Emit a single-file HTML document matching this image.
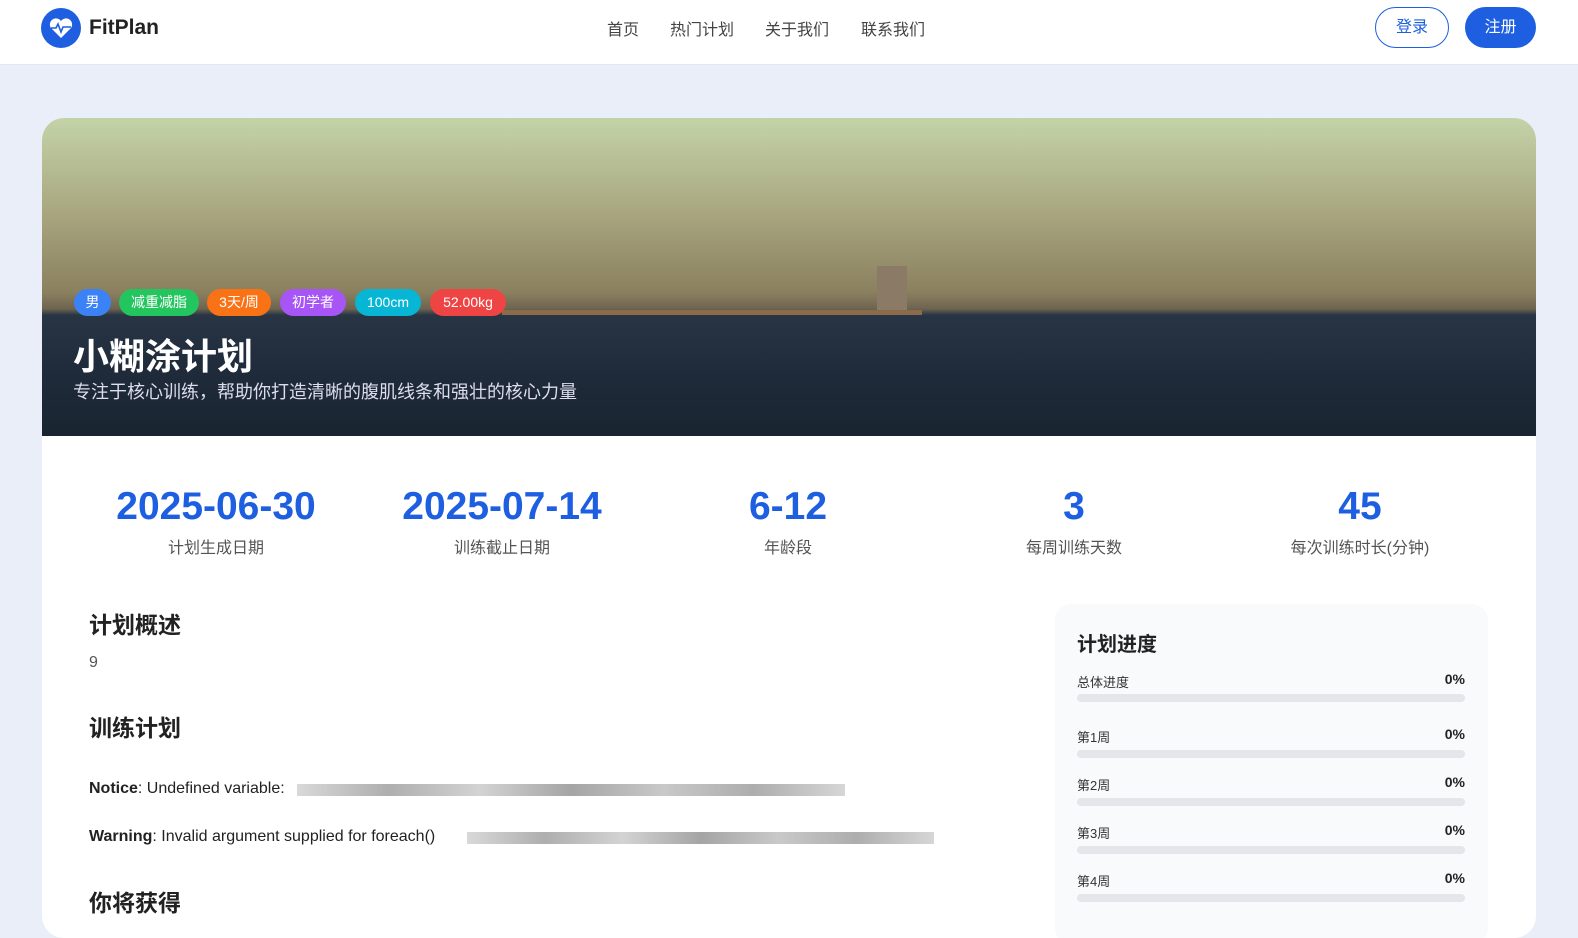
<!DOCTYPE html>
<html><head><meta charset="utf-8"><style>
*{margin:0;padding:0;box-sizing:border-box}
body{width:1578px;height:921px;overflow:hidden;background:#e9eef9;font-family:"Liberation Sans","Noto Sans CJK SC",sans-serif;position:relative;color:#222}
.nav{position:absolute;left:0;top:0;width:1578px;height:65px;background:#fff;border-bottom:1px solid #e3e7ee}
.logo{position:absolute;left:41px;top:8px;width:40px;height:40px;border-radius:50%;background:#1d5fe0}
.brand{position:absolute;left:89px;top:16px;font-size:21px;font-weight:bold;color:#222}
.menu{position:absolute;top:16px;font-size:16px;color:#444}
.btn{position:absolute;top:7px;height:41px;border-radius:21px;font-size:16px;text-align:center;line-height:39px}
.card{position:absolute;left:42px;top:118px;width:1494px;height:820px;background:#fff;border-radius:22px;overflow:hidden}
.hero{position:absolute;left:0;top:0;width:1494px;height:318px;background:linear-gradient(#c4d3a8 0%,#a8a67f 30%,#8a805f 55%,#6e6450 60%,#283545 62%,#1f2b3a 80%,#1a2431 100%)}
.tag{position:absolute;top:171px;height:27px;border-radius:14px;color:#fff;font-size:14px;line-height:27px;text-align:center}
.num{position:absolute;top:367px;width:300px;text-align:center;font-size:39px;font-weight:bold;color:#1d5fe0}
.lab{position:absolute;top:416px;width:300px;text-align:center;font-size:16px;color:#555}
h2{position:absolute;left:47px;font-size:23px;font-weight:bold;color:#222}
.pc{position:absolute;left:1013px;top:486px;width:433px;height:340px;background:#f8fafc;border-radius:16px}
.pl{position:absolute;left:22px;font-size:13px;color:#333}
.pv{position:absolute;right:23px;font-size:14px;font-weight:bold;color:#222}
.bar{position:absolute;left:22px;width:388px;height:8px;border-radius:4px;background:#e4e6e9}
.blur{position:absolute;height:12px;background:linear-gradient(90deg,#cfcfcf,#9a9a9a,#c8c8c8,#8e8e8e,#bbb,#999,#ccc);opacity:.8}
</style></head><body>
<div class="nav">
<div class="logo"><svg width="40" height="40" viewBox="0 0 40 40"><path d="M20 30 L10 20 A5.5 5.5 0 0 1 20 13 A5.5 5.5 0 0 1 30 20 Z" fill="#fff"/><path d="M10 20 H15 L17 16 L20 24 L22 19 H30" stroke="#1d5fe0" stroke-width="1.6" fill="none"/></svg></div>
<div class="brand">FitPlan</div>
<div class="menu" style="left:607px">首页</div>
<div class="menu" style="left:670px">热门计划</div>
<div class="menu" style="left:765px">关于我们</div>
<div class="menu" style="left:861px">联系我们</div>
<div class="btn" style="left:1375px;width:74px;border:1px solid #1d5fe0;color:#1d5fe0">登录</div>
<div class="btn" style="left:1465px;width:71px;background:#1d5fe0;color:#fff;line-height:41px">注册</div>
</div>
<div class="card">
<div class="hero">
<div style="position:absolute;left:835px;top:148px;width:30px;height:46px;background:#8b7a66"></div>
<div style="position:absolute;left:460px;top:192px;width:420px;height:5px;background:#8c6b4a"></div>
<div class="tag" style="left:32px;width:37px;background:#3b82f6">男</div>
<div class="tag" style="left:77px;width:80px;background:#22c55e">减重减脂</div>
<div class="tag" style="left:165px;width:64px;background:#f97316">3天/周</div>
<div class="tag" style="left:238px;width:66px;background:#a855f7">初学者</div>
<div class="tag" style="left:313px;width:66px;background:#06b6d4">100cm</div>
<div class="tag" style="left:388px;width:76px;background:#ef4444">52.00kg</div>
<div style="position:absolute;left:31px;top:210px;font-size:36px;font-weight:bold;color:#fff">小糊涂计划</div>
<div style="position:absolute;left:31px;top:260px;font-size:18px;color:#dde">专注于核心训练，帮助你打造清晰的腹肌线条和强壮的核心力量</div>
</div>
<div class="num" style="left:24px">2025-06-30</div><div class="lab" style="left:24px">计划生成日期</div>
<div class="num" style="left:310px">2025-07-14</div><div class="lab" style="left:310px">训练截止日期</div>
<div class="num" style="left:596px">6-12</div><div class="lab" style="left:596px">年龄段</div>
<div class="num" style="left:882px">3</div><div class="lab" style="left:882px">每周训练天数</div>
<div class="num" style="left:1168px">45</div><div class="lab" style="left:1168px">每次训练时长(分钟)</div>
<h2 style="top:488px">计划概述</h2>
<div style="position:absolute;left:47px;top:536px;font-size:16px;color:#555">9</div>
<h2 style="top:591px">训练计划</h2>
<div style="position:absolute;left:47px;top:662px;font-size:16px"><b>Notice</b>: Undefined variable:</div>
<div class="blur" style="left:255px;top:666px;width:548px"></div>
<div style="position:absolute;left:47px;top:710px;font-size:16px"><b>Warning</b>: Invalid argument supplied for foreach()</div>
<div class="blur" style="left:425px;top:714px;width:467px"></div>
<h2 style="top:766px">你将获得</h2>
<div class="pc">
<div style="position:absolute;left:22px;top:24px;font-size:20px;font-weight:bold">计划进度</div>
<div class="pl" style="top:68px">总体进度</div><div class="pv" style="top:67px">0%</div><div class="bar" style="top:90px"></div>
<div class="pl" style="top:123px">第1周</div><div class="pv" style="top:122px">0%</div><div class="bar" style="top:146px"></div>
<div class="pl" style="top:171px">第2周</div><div class="pv" style="top:170px">0%</div><div class="bar" style="top:194px"></div>
<div class="pl" style="top:219px">第3周</div><div class="pv" style="top:218px">0%</div><div class="bar" style="top:242px"></div>
<div class="pl" style="top:267px">第4周</div><div class="pv" style="top:266px">0%</div><div class="bar" style="top:290px"></div>
</div>
</div>
</body></html>
